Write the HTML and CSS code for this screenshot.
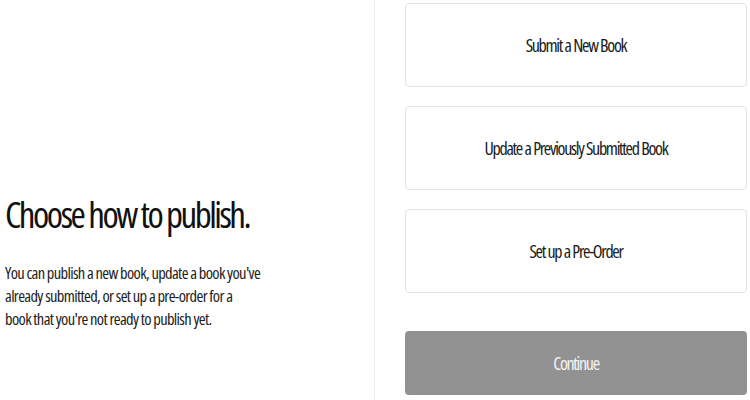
FILE: index.html
```html
<!DOCTYPE html>
<html lang="en">
<head>
<meta charset="utf-8">
<title>Choose how to publish</title>
<link rel="stylesheet" href="styles.css">
</head>
<body>
<main class="page">
  <section class="intro">
    <h1 class="title">Choose how to publish.</h1>
    <p class="lead">You can publish a new book, update a book you've already submitted, or set up a pre-order for a<br>book that you're not ready to publish yet.</p>
  </section>
  <section class="options">
    <button class="option" type="button">Submit a New Book</button>
    <button class="option" type="button">Update a Previously Submitted Book</button>
    <button class="option" type="button">Set up a Pre-Order</button>
    <button class="continue" type="button" disabled>Continue</button>
  </section>
</main>
</body>
</html>
```
FILE: styles.css
```css
* { box-sizing: border-box; }
html, body { margin: 0; padding: 0; background: #fff; }
body {
  font-family: "Open Sans", "Liberation Sans", sans-serif;
  font-stretch: 75%;
  color: #1c1c1c;
}
.page {
  display: flex;
  height: 400px;
  overflow: hidden;
}
.intro {
  width: 375px;
  flex: none;
  padding: 192px 0 0 5px;
  border-right: 1px solid #ececec;
}
.title {
  margin: 0;
  font-size: 37px;
  line-height: 44px;
  font-weight: 400;
  letter-spacing: -2.5px;
  word-spacing: 0.5px;
  color: #111;
}
.lead {
  margin: 25px 0 0;
  width: 262px;
  font-size: 16.5px;
  line-height: 23px;
  letter-spacing: -0.65px;
  color: #1c1c1c;
}
.options {
  flex: 1;
  display: flex;
  flex-direction: column;
  padding: 3px 3px 0 30px;
}
.option, .continue {
  font-family: inherit;
  font-stretch: 75%;
  font-size: 18px;
  font-weight: 400;
  letter-spacing: -1.3px;
  word-spacing: 0.5px;
  border-radius: 4px;
  cursor: pointer;
}
.option {
  height: 84px;
  margin-bottom: 19px;
  background: #fff;
  border: 1px solid #e4e4e4;
  color: #1a1a1a;
}
.continue {
  height: 64px;
  margin-top: 19px;
  background: #929292;
  border: none;
  color: #f4f4f4;
}
```
